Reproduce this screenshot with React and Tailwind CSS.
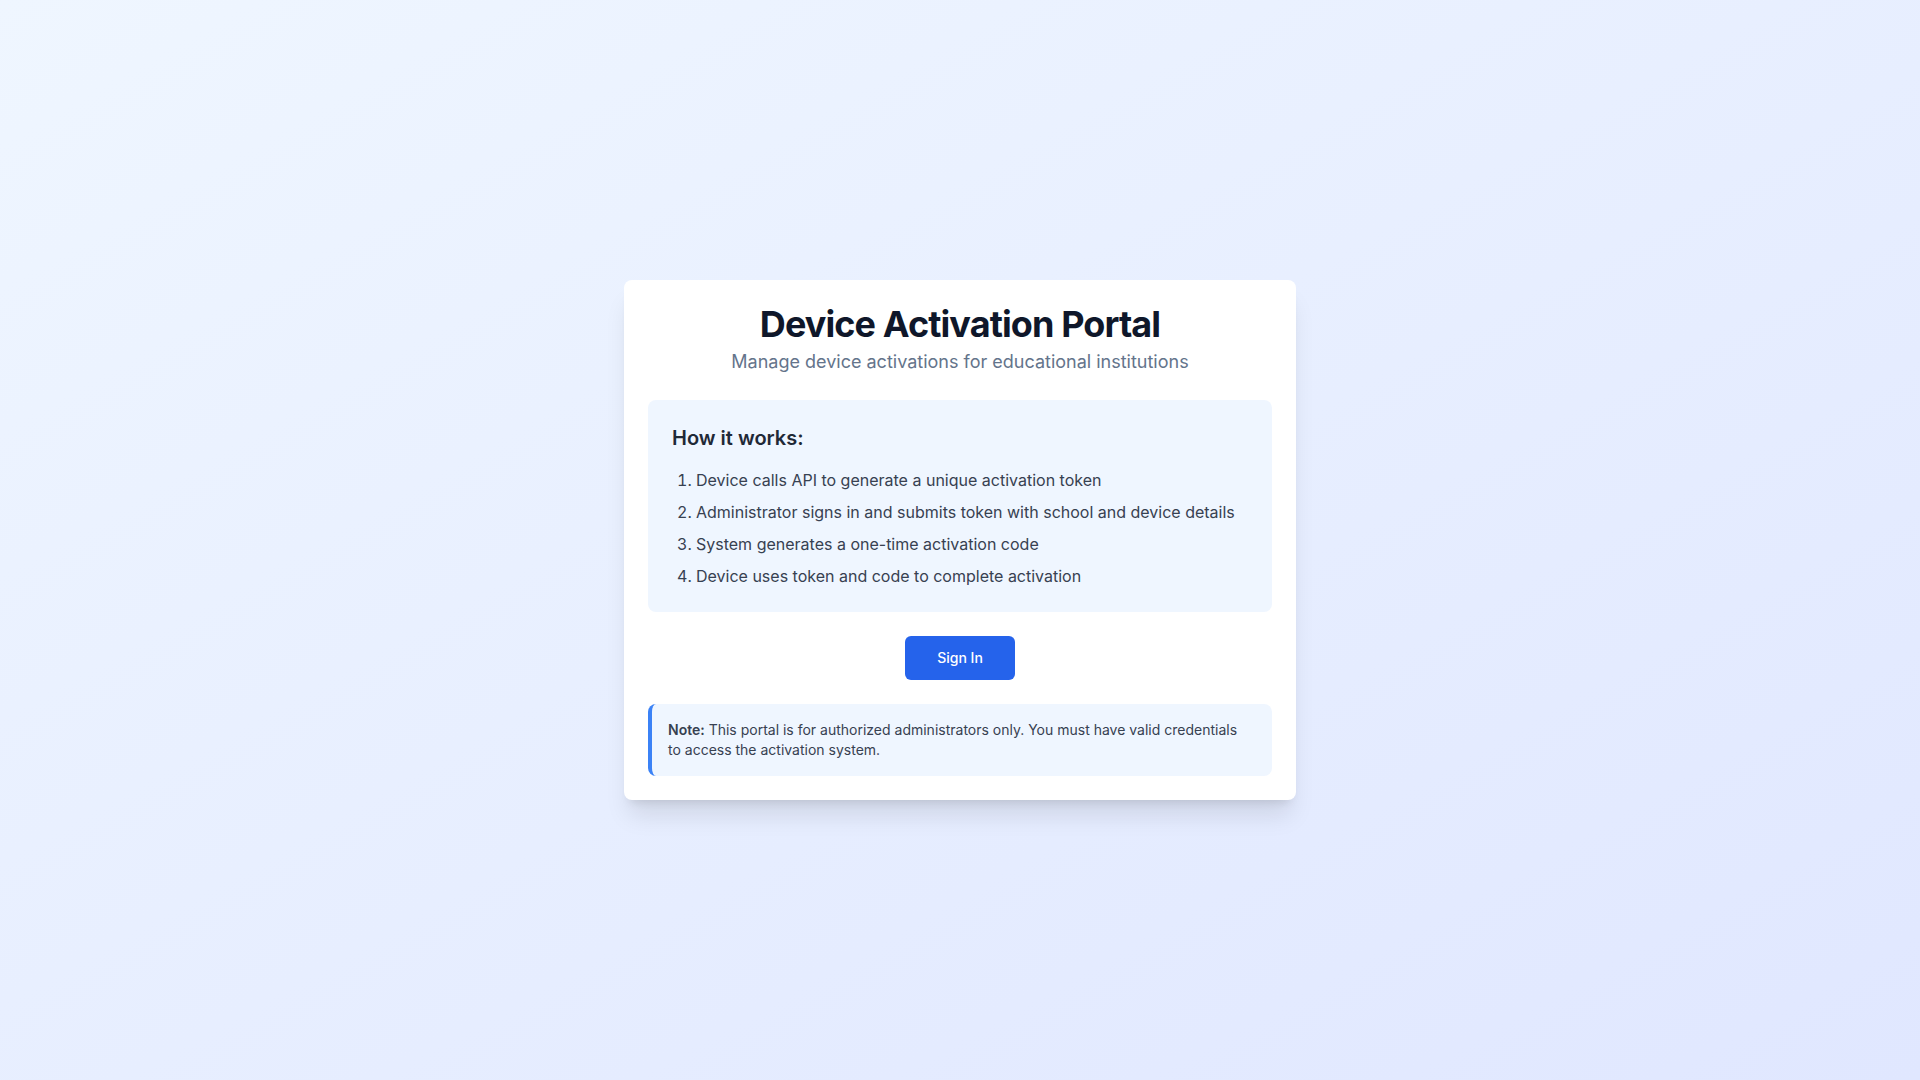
export default function App() {
  return (
    <div
      className="min-h-screen flex items-center justify-center bg-gradient-to-br from-[#eff6ff] to-[#e0e7ff]"
      style={{ fontFamily: 'Inter, "Noto Sans", sans-serif' }}
    >
      <div className="w-full max-w-2xl bg-white rounded-lg shadow-xl p-6">
        <div className="text-center mb-6">
          <h1 className="text-4xl font-bold tracking-tight text-[#0f172a]">Device Activation Portal</h1>
          <p className="mt-1 text-lg text-[#64748b]">Manage device activations for educational institutions</p>
        </div>
        <div className="bg-[#eff6ff] rounded-lg p-6 mb-6">
          <h2 className="text-xl font-semibold text-[#1f2937] mb-4">How it works:</h2>
          <ol className="list-decimal pl-6 space-y-2 text-base text-[#374151]">
            <li>Device calls API to generate a unique activation token</li>
            <li>Administrator signs in and submits token with school and device details</li>
            <li>System generates a one-time activation code</li>
            <li>Device uses token and code to complete activation</li>
          </ol>
        </div>
        <div className="flex justify-center mb-6">
          <button className="px-8 py-3 bg-[#2563eb] text-white text-sm font-medium rounded-md">Sign In</button>
        </div>
        <div className="bg-[#eff6ff] border-l-4 border-[#3b82f6] rounded-lg p-4">
          <p className="text-sm text-[#374151] pr-2">
            <span className="font-semibold">Note:</span> This portal is for authorized administrators only. You must have valid credentials to access the activation system.
          </p>
        </div>
      </div>
    </div>
  );
}
